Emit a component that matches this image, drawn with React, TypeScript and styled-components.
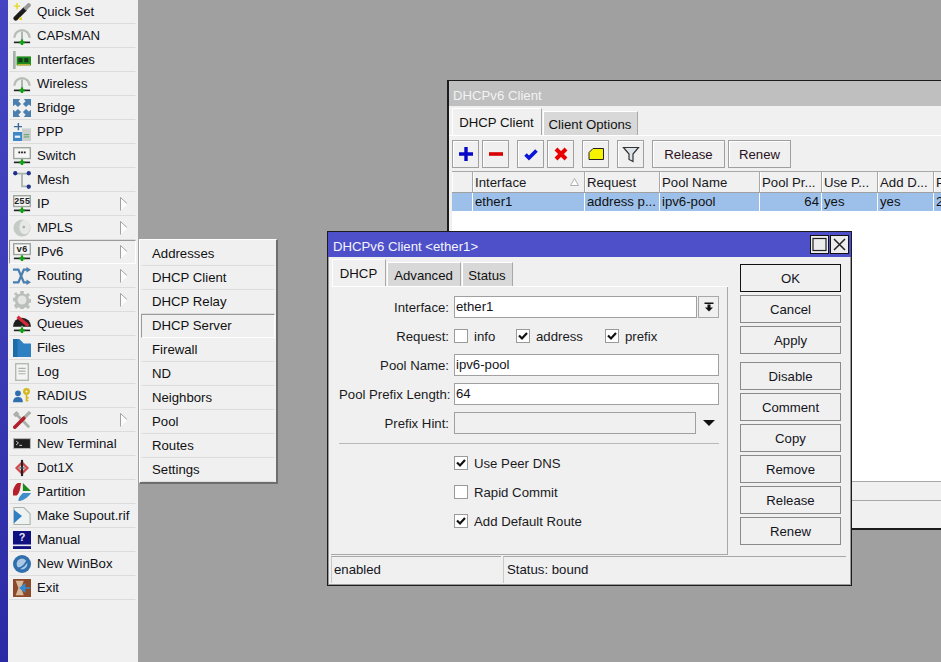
import React from "react";
import styled, { createGlobalStyle } from "styled-components";

const Global = createGlobalStyle`
  html, body { margin: 0; padding: 0; height: 662px; overflow: hidden; background: #a0a0a0; }
  body { font-family: "Liberation Sans", Arial, sans-serif; font-size: 13.2px; color: #111; }
  #root { height: 662px; }
  * { box-sizing: border-box; }
`;

const Page = styled.div`
  position: relative; width: 941px; height: 662px; overflow: hidden; display: flex; background: #a0a0a0;
`;
const Strip = styled.div`
  width: 8px; height: 100%; background: linear-gradient(180deg, #4545c4 0%, #3b3bb6 50%, #2a2aa4 100%);
`;
const Sidebar = styled.nav`
  width: 130px; height: 100%; background: #f0f0f0; display: flex; flex-direction: column; flex: none;
`;
const MenuRow = styled.div<{ $active?: boolean }>`
  position: relative; height: 24px; flex: none; display: flex; align-items: center; gap: 6px;
  padding: 0 0 1px 3px; margin: 0 2px 0 1px;
  border-bottom: 1px solid ${p => (p.$active ? "#fff" : "#dcdcdc")};
  border-top: 1px solid ${p => (p.$active ? "#9a9a9a" : "transparent")};
  border-left: 1px solid ${p => (p.$active ? "#9a9a9a" : "transparent")};
  border-right: 1px solid ${p => (p.$active ? "#fff" : "transparent")};
`;
const MenuIcon = styled.svg`
  width: 18px; height: 18px; flex: none; display: block;
`;
const MenuLabel = styled.span`
  flex: 1; white-space: nowrap; line-height: 16px; color: #101018;
`;
const Arrow = styled.svg`
  width: 8px; height: 14px; flex: none; margin-right: 7px;
`;

const SubMenu = styled.div`
  position: absolute; left: 139px; top: 239px; width: 139px; height: 245px;
  padding: 2px 1px 1px 1px; background: #f0f0f0; display: flex; flex-direction: column;
  border-top: 1px solid #fff; border-left: 1px solid #fff;
  border-right: 2px solid #6e6e6e; border-bottom: 2px solid #6e6e6e;
`;
const SubRow = styled.div<{ $hover?: boolean }>`
  height: 24px; flex: none; display: flex; align-items: center; padding: 0 0 1px 10px; white-space: nowrap;
  border-bottom: 1px solid ${p => (p.$hover ? "#fff" : "#dcdcdc")};
  border-top: 1px solid ${p => (p.$hover ? "#9a9a9a" : "transparent")};
  border-left: 1px solid ${p => (p.$hover ? "#9a9a9a" : "transparent")};
  border-right: 1px solid ${p => (p.$hover ? "#fff" : "transparent")};
`;

const BackWindow = styled.section`
  position: absolute; left: 447px; top: 80px; width: 600px; height: 450px;
  background: #f0f0f0; border: 1px solid #1c1c1c; border-left-width: 2px; border-bottom-width: 2px;
  display: flex; flex-direction: column;
`;
const BackTitle = styled.div`
  height: 25px; flex: none; background: #bfbfbf; color: #f2f2f2; padding: 3px 0 0 4px; display: flex; align-items: center;
`;
const TabStrip = styled.div<{ $left: number }>`
  height: 30px; flex: none; display: flex; align-items: flex-end; padding-left: ${p => p.$left}px; gap: 1px;
  border-bottom: 1px solid #fff;
`;
const Tab = styled.div<{ $active?: boolean; $w: number }>`
  width: ${p => p.$w}px; height: ${p => (p.$active ? 27 : 24)}px; flex: none;
  display: flex; align-items: center; justify-content: center; white-space: nowrap;
  background: ${p => (p.$active ? "#f0f0f0" : "#d8d8d8")};
  border-top: 1px solid #fff; border-left: 1px solid #fff;
  border-right: 1px solid #a8a8a8;
  padding: 1px 1px 0 0;
`;
const Toolbar = styled.div`
  height: 35px; flex: none; padding: 4px 0 0 3px; display: flex; align-items: flex-start;
`;
const ToolButton = styled.button<{ $w: number; $ml?: number }>`
  width: ${p => p.$w}px; height: 28px; flex: none; margin-left: ${p => p.$ml ?? 0}px;
  background: #f0f0f0; border: 1px solid #a0a0a0; padding: 0;
  font: inherit; color: #2a1020; display: flex; align-items: center; justify-content: center;
  box-shadow: inset 1px 1px 0 #fff;
`;
const ToolIcon = styled.svg`
  width: 20px; height: 20px; display: block;
`;
const TableArea = styled.div`
  flex: 1; margin-left: 3px; background: #fff; display: flex; flex-direction: column;
`;
const Grid = styled.div`
  display: grid; grid-template-columns: 21px 112px 75px 100px 62px 56px 56px 100px;
`;
const HeadCell = styled.div`
  position: relative; height: 22px; background: #f0f0f0; border-top: 1px solid #a8a8a8; border-bottom: 1px solid #a0a0a0;
  border-right: 1px solid #a8a8a8; box-shadow: inset 1px 0 0 #fff;
  padding-left: 2px; line-height: 21px; white-space: nowrap; overflow: hidden; color: #181820;
`;
const SortMark = styled.svg`
  position: absolute; right: 5px; top: 6px; width: 9px; height: 8px;
`;
const DataCell = styled.div<{ $right?: boolean }>`
  height: 18px; background: #9dc0ea; border-right: 1px solid #fff; padding: 0 2px 0 2px; line-height: 17px;
  white-space: nowrap; overflow: hidden; text-align: ${p => (p.$right ? "right" : "left")};
`;
const BackFooter = styled.div`
  height: 47px; flex: none; display: flex; flex-direction: column;
`;
const FooterBand = styled.div<{ $h: number }>`
  height: ${p => p.$h}px; border-top: 1px solid #a8a8a8; background: #f0f0f0;
`;

const Dialog = styled.section`
  position: absolute; left: 327px; top: 231px; width: 525px; height: 355px;
  background: #f0f0f0; border: 1px solid #1c1c1c; display: flex; flex-direction: column;
  box-shadow: inset 1px 0 0 #9a9a9a, inset -1px 0 0 #9a9a9a, inset 0 -1px 0 #9a9a9a;
`;
const DialogTitle = styled.div`
  height: 25px; flex: none; background: #4d50c8; color: #f4f4fc; padding: 0 2px 0 5px; display: flex; align-items: center;
  justify-content: space-between;
`;
const DialogTitleText = styled.span`
  padding-top: 3px;
`;
const WinButtons = styled.div`
  display: flex; gap: 1px;
`;
const WinButton = styled.button`
  width: 19px; height: 19px; padding: 0; background: #ececec; border: 1px solid #111; display: flex; align-items: center; justify-content: center;
`;
const WinGlyph = styled.svg`
  width: 15px; height: 15px; display: block;
`;
const DialogBody = styled.div`
  flex: 1; min-height: 0; display: flex; padding-left: 3px;
`;
const LeftCol = styled.div`
  width: 397px; flex: none; display: flex; flex-direction: column;
`;
const Panel = styled.div`
  height: 268px; flex: none; padding: 9px 8px 0 8px; display: flex; flex-direction: column; gap: 7px;
  border-right: 1px solid #a8a8a8; border-bottom: 1px solid #a8a8a8;
`;
const FormRow = styled.div`
  height: 22px; flex: none; display: flex; align-items: center;
`;
const FieldLabel = styled.label`
  width: 110px; flex: none; margin-right: 5px; text-align: right; white-space: nowrap; color: #1a1a22;
`;
const Input = styled.div<{ $disabled?: boolean; $w?: number }>`
  width: ${p => (p.$w ? `${p.$w}px` : "auto")}; flex: ${p => (p.$w ? "none" : 1)}; height: 22px;
  background: ${p => (p.$disabled ? "#f0f0f0" : "#fff")}; border: 1px solid #a0a0a0; padding: 0 1px; line-height: 19px; color: #14141c;
`;
const DropButton = styled.button`
  width: 21px; height: 22px; margin-left: 1px; padding: 0; background: #f0f0f0; border: 1px solid #a8a8a8;
  display: flex; align-items: center; justify-content: center;
`;
const DropMark = styled.svg`
  width: 12px; height: 12px; display: block;
`;
const HintArrow = styled.svg`
  width: 12px; height: 6px; margin-left: 7px; flex: none;
`;
const CheckItem = styled.div<{ $w?: number }>`
  width: ${p => (p.$w ? `${p.$w}px` : "auto")}; flex: none; display: flex; align-items: center; gap: 6px; white-space: nowrap; color: #1a1a22;
`;
const CheckBox = styled.span`
  width: 14px; height: 14px; flex: none; background: #fff; border: 1px solid #9a9a9a; display: flex; align-items: center; justify-content: center;
`;
const CheckMark = styled.svg`
  width: 10px; height: 10px; display: block;
`;
const Divider = styled.div`
  height: 1px; flex: none; margin: 2px 0 1px; background: #b8b8b8;
`;
const RightCol = styled.div`
  width: 101px; margin-left: 12px; flex: none; padding-top: 7px; display: flex; flex-direction: column; gap: 3px;
`;
const ActionButton = styled.button<{ $primary?: boolean; $gap?: number }>`
  height: 28px; flex: none; padding: 0; margin-top: ${p => p.$gap ?? 0}px; background: #f0f0f0; font: inherit; color: #14141c;
  border: 1px solid ${p => (p.$primary ? "#111" : "#8a8a8a")};
`;
const StatusBar = styled.div`
  height: 27px; flex: none; margin: 0 5px 2px 3px; display: flex; gap: 2px;
`;
const StatusCell = styled.div<{ $w?: number }>`
  width: ${p => (p.$w ? `${p.$w}px` : "auto")}; flex: ${p => (p.$w ? "none" : 1)}; border-top: 1px solid #a8a8a8; border-left: 1px solid #c8c8c8;
  padding: 5px 0 0 ${p => (p.$w ? 2 : 3)}px; line-height: 16px; color: #14141c;
`;

const Base = ({ children }: { children: React.ReactNode }) => <MenuIcon viewBox="0 0 20 20">{children}</MenuIcon>;
const PlugBase = () => (
  <>
    <rect x="1" y="16.2" width="18" height="1.8" fill="#222" />
    <rect x="9" y="12" width="2" height="4" fill="#9aa" />
    <path d="M10 14v6M7 17h6" stroke="#12a012" strokeWidth="2.6" />
  </>
);
const Antenna = () => (
  <Base>
    <path d="M1.500 12 A8.500 8.500 0 0 1 18.500 12" fill="#eef0ee" stroke="#b8bdb8" strokeWidth="2.6" />
    <path d="M10 5v10" stroke="#9aa09a" strokeWidth="1.600" />
    <PlugBase />
  </Base>
);
const QuickIcon = () => (
  <Base>
    <path d="M3 17 L13 7" stroke="#1c1c1c" strokeWidth="5" strokeLinecap="round" />
    <path d="M13 7 L19 1" stroke="#9a9a9a" strokeWidth="4.500" />
    <path d="M4.500 0v7M1 3.500h7" stroke="#e6d81e" strokeWidth="1.600" />
    <path d="M7 16h3v3H7z" fill="#e6d81e" />
  </Base>
);
const InterfacesIcon = () => (
  <Base>
    <rect x="0" y="0" width="3" height="20" fill="#a6b2a8" />
    <rect x="4" y="6" width="16" height="10" fill="#1d8c1d" />
    <rect x="6" y="8" width="4.500" height="4.500" fill="#1a3a1a" />
    <rect x="12.500" y="8" width="4.500" height="4.500" fill="#1a3a1a" />
    <rect x="5" y="14.500" width="14" height="1.500" fill="#c8b43a" />
  </Base>
);
const BridgeIcon = () => (
  <Base>
    <g fill="#4b7fae">
      <path d="M0 0h8L6 2.500 9 5.500 5.500 9 2.500 6 0 8z" />
      <path d="M20 0h-8l2 2.500-3 3L14.500 9l3-3L20 8z" />
      <path d="M0 20h8l-2-2.500 3-3L5.500 11l-3 3L0 12z" />
      <path d="M20 20h-8l2-2.500-3-3 3.500-3.500 3 3 2.500-2z" />
    </g>
  </Base>
);
const PPPIcon = () => (
  <Base>
    <path d="M6 0v8M1 4h9" stroke="#3b6a96" strokeWidth="1.600" />
    <rect x="0" y="10" width="10" height="10" fill="#3f86c6" />
    <rect x="2" y="14" width="6" height="2.500" fill="#e8f0f8" />
    <rect x="10" y="6" width="10" height="14" fill="#c9cfcc" />
    <path d="M12 13h6M12 15.500h6" stroke="#4d9a5a" strokeWidth="1" />
  </Base>
);
const SwitchIcon = () => (
  <Base>
    <rect x=".8" y=".8" width="18.400" height="12" fill="#f6f6f6" stroke="#9aa39c" strokeWidth="1.500" />
    <rect x="6" y="5" width="2" height="2" fill="#222" />
    <rect x="9" y="5" width="2" height="2" fill="#222" />
    <rect x="12" y="5" width="2" height="2" fill="#222" />
    <PlugBase />
  </Base>
);
const MeshIcon = () => (
  <Base>
    <path d="M3 3h14M10 3v14h7" stroke="#a9b3ac" strokeWidth="2" fill="none" />
    <circle cx="2.500" cy="2.500" r="2.400" fill="#1f2f8c" />
    <circle cx="17.500" cy="2.500" r="2.400" fill="#1f2f8c" />
    <circle cx="17.500" cy="17.500" r="2.400" fill="#1f2f8c" />
  </Base>
);
const BoxText = ({ t }: { t: string }) => (
  <Base>
    <rect x=".8" y=".8" width="18.400" height="12" fill="#f6f6f6" stroke="#9aa39c" strokeWidth="1.500" />
    <text x="10" y="10.500" fontSize="10" fontFamily="Liberation Mono, monospace" fontWeight="700" textAnchor="middle" fill="#222">{t}</text>
    <PlugBase />
  </Base>
);
const MplsIcon = () => (
  <Base>
    <circle cx="10" cy="10" r="9.500" fill="#c4cac5" />
    <ellipse cx="13" cy="9" rx="6" ry="8" fill="#e6e8e6" />
    <circle cx="12" cy="9" r="1.500" fill="#a8aea9" />
  </Base>
);
const RoutingIcon = () => (
  <Base>
    <g fill="none" stroke="#4b7fae" strokeWidth="2.400">
      <path d="M0 3h6l6 14h4" />
      <path d="M0 17h6l6-14h4" />
    </g>
    <path d="M15 0l5 3-5 3zM15 14l5 3-5 3z" fill="#4b7fae" />
  </Base>
);
const SystemIcon = () => (
  <Base>
    <path d="M8 0h4v3l2.500 1 2-2 2.500 2.500-2 2 1 2.500h2v4h-2l-1 2.500 2 2-2.500 2.500-2-2-2.500 1v2H8v-2l-2.500-1-2 2L1 16l2-2-1-2.500H0v-4h2l1-2.500-2-2L3.500 1.500l2 2L8 3z" fill="#b9bfba" />
    <circle cx="10" cy="10" r="5" fill="#e4e6e4" />
  </Base>
);
const QueuesIcon = () => (
  <Base>
    <path d="M0 13 A10 10 0 0 1 20 13z" fill="#1e1e1e" />
    <path d="M5 2 L17 12" stroke="#d8283a" strokeWidth="3.500" />
    <PlugBase />
  </Base>
);
const FilesIcon = () => (
  <Base>
    <path d="M0 0h7l5 5h8v15H0z" fill="#2f80c2" />
    <path d="M0 0h5v20H0z" fill="#1e6ba8" />
  </Base>
);
const LogIcon = () => (
  <Base>
    <rect x="3" y=".8" width="14" height="18.400" fill="#f4f4f4" stroke="#b0b8b0" strokeWidth="1.500" />
    <path d="M6 6h8M6 9h8M6 12h8" stroke="#a8b0a8" strokeWidth="1.200" />
  </Base>
);
const RadiusIcon = () => (
  <Base>
    <circle cx="5.500" cy="7" r="3.200" fill="#2f6fb0" />
    <path d="M0 17c0-4 2-6 5.500-6s5.500 2 5.500 6z" fill="#2f6fb0" />
    <circle cx="15" cy="5" r="3.800" fill="#d4b81c" />
    <circle cx="15" cy="5" r="1.200" fill="#f0f0f0" />
    <path d="M15 8v8M15 12h2.500M15 15h2" stroke="#d4b81c" strokeWidth="1.800" />
  </Base>
);
const ToolsIcon = () => (
  <Base>
    <path d="M2 2 L18 18" stroke="#a9b0aa" strokeWidth="3" />
    <path d="M0 4l4-4 3 3-4 4z" fill="#a9b0aa" />
    <path d="M19 1 L11 9" stroke="#a9b0aa" strokeWidth="3.500" />
    <path d="M12 8 L2 18" stroke="#b3202c" strokeWidth="4" strokeLinecap="round" />
  </Base>
);
const TerminalIcon = () => (
  <Base>
    <rect x=".6" y="4" width="18.800" height="11" fill="#1d1d1d" stroke="#b4b8b4" strokeWidth="1.200" />
    <path d="M3.500 6.500 L6 9 L3.500 11" stroke="#eee" strokeWidth="1" fill="none" />
    <path d="M7 11.500h3" stroke="#eee" strokeWidth="1" />
  </Base>
);
const DotIcon = () => (
  <Base>
    <path d="M10 4 L16 10 L10 16 L4 10z" fill="none" stroke="#cf4a50" strokeWidth="2.600" />
    <path d="M10 1v18" stroke="#222" strokeWidth="2.400" />
    <path d="M7 10h6" stroke="#555" strokeWidth="1.500" />
  </Base>
);
const PartitionIcon = () => (
  <Base>
    <path d="M9 0 L5 0 C1 3 -1 9 0 14 L4 14 C8 11 8 5 9 0z" fill="#b5202c" />
    <path d="M11 0 L20 9 L11 9z" fill="#1e8a1e" />
    <path d="M6 20 C10 20 16 17 20 11 L11 11 C8 14 6 16 6 20z" fill="#3f8ccc" />
  </Base>
);
const SupoutIcon = () => (
  <Base>
    <path d="M1 .6h11l7 7V19.400H1z" fill="#eef2f0" stroke="#aab4ae" strokeWidth="1.200" />
    <path d="M1 3 L10 10 L1 18z" fill="#2f80c2" />
  </Base>
);
const ManualIcon = () => (
  <Base>
    <rect x="0" y="0" width="20" height="20" fill="#101080" />
    <text x="10" y="11" fontSize="12" fontFamily="Liberation Sans, sans-serif" fontWeight="700" textAnchor="middle" fill="#e8e8f4">?</text>
    <rect x="0" y="15" width="20" height="1.800" fill="#e8e8f4" />
  </Base>
);
const WinboxIcon = () => (
  <Base>
    <circle cx="10" cy="10" r="10" fill="#2f6fae" />
    <circle cx="10" cy="10" r="6" fill="#a9c8e4" />
    <path d="M5 15 C10 15 15 10 16 5" stroke="#2f6fae" strokeWidth="2" fill="none" />
  </Base>
);
const ExitIcon = () => (
  <Base>
    <rect x="0" y="0" width="20" height="20" fill="#8c4a2a" />
    <path d="M3 2h9L9 10l3 8H3l3-8z" fill="#d8b89a" />
    <path d="M19 10h-7M13 6l-5 4 5 4z" stroke="#2f8cd6" strokeWidth="1.500" fill="#2f8cd6" />
  </Base>
);

type Item = { label: string; icon: React.ReactNode; arrow?: boolean; active?: boolean };
const items: Item[] = [
  { label: "Quick Set", icon: <QuickIcon /> },
  { label: "CAPsMAN", icon: <Antenna /> },
  { label: "Interfaces", icon: <InterfacesIcon /> },
  { label: "Wireless", icon: <Antenna /> },
  { label: "Bridge", icon: <BridgeIcon /> },
  { label: "PPP", icon: <PPPIcon /> },
  { label: "Switch", icon: <SwitchIcon /> },
  { label: "Mesh", icon: <MeshIcon /> },
  { label: "IP", icon: <BoxText t="255" />, arrow: true },
  { label: "MPLS", icon: <MplsIcon />, arrow: true },
  { label: "IPv6", icon: <BoxText t="v6" />, arrow: true, active: true },
  { label: "Routing", icon: <RoutingIcon />, arrow: true },
  { label: "System", icon: <SystemIcon />, arrow: true },
  { label: "Queues", icon: <QueuesIcon /> },
  { label: "Files", icon: <FilesIcon /> },
  { label: "Log", icon: <LogIcon /> },
  { label: "RADIUS", icon: <RadiusIcon /> },
  { label: "Tools", icon: <ToolsIcon />, arrow: true },
  { label: "New Terminal", icon: <TerminalIcon /> },
  { label: "Dot1X", icon: <DotIcon /> },
  { label: "Partition", icon: <PartitionIcon /> },
  { label: "Make Supout.rif", icon: <SupoutIcon /> },
  { label: "Manual", icon: <ManualIcon /> },
  { label: "New WinBox", icon: <WinboxIcon /> },
  { label: "Exit", icon: <ExitIcon /> },
];
const sub = ["Addresses", "DHCP Client", "DHCP Relay", "DHCP Server", "Firewall", "ND", "Neighbors", "Pool", "Routes", "Settings"];

const Tick = () => (
  <CheckMark viewBox="0 0 10 10"><path d="M1 4.500 L4 7.500 L9 2" stroke="#111" strokeWidth="2.200" fill="none" /></CheckMark>
);
const Check = ({ on, label, w }: { on?: boolean; label: string; w?: number }) => (
  <CheckItem $w={w}>
    <CheckBox>{on && <Tick />}</CheckBox>
    {label}
  </CheckItem>
);

export default function App() {
  return (
    <Page>
      <Global />
      <Strip />
      <Sidebar>
        {items.map(it => (
          <MenuRow key={it.label} $active={it.active}>
            {it.icon}
            <MenuLabel>{it.label}</MenuLabel>
            {it.arrow && (
              <Arrow viewBox="0 0 8 14"><path d="M.5 .5 L7.500 7 L.5 13.500z" fill="#fff" stroke="none" /><path d="M.5 13.500V.5L7 6.500" fill="none" stroke="#a0a0a0" /></Arrow>
            )}
          </MenuRow>
        ))}
      </Sidebar>

      <SubMenu>
        {sub.map(s => <SubRow key={s} $hover={s === "DHCP Server"}>{s}</SubRow>)}
      </SubMenu>

      <BackWindow>
        <BackTitle>DHCPv6 Client</BackTitle>
        <TabStrip $left={3}>
          <Tab $active $w={90}>DHCP Client</Tab>
          <Tab $w={95}>Client Options</Tab>
        </TabStrip>
        <Toolbar>
          <ToolButton $w={27}>
            <ToolIcon viewBox="0 0 20 20"><path d="M10 3v14M3 10h14" stroke="#0808c8" strokeWidth="3.400" /></ToolIcon>
          </ToolButton>
          <ToolButton $w={27} $ml={3}>
            <ToolIcon viewBox="0 0 20 20"><path d="M3 10h14" stroke="#d80000" strokeWidth="3.600" /></ToolIcon>
          </ToolButton>
          <ToolButton $w={27} $ml={8}>
            <ToolIcon viewBox="0 0 20 20"><path d="M4.500 10.500 L8 14 L15.500 6.500" stroke="#0a14d8" strokeWidth="3.600" fill="none" /></ToolIcon>
          </ToolButton>
          <ToolButton $w={27} $ml={3}>
            <ToolIcon viewBox="0 0 20 20"><path d="M5 5 L15 15 M15 5 L5 15" stroke="#e80000" strokeWidth="4" /></ToolIcon>
          </ToolButton>
          <ToolButton $w={27} $ml={8}>
            <ToolIcon viewBox="0 0 20 20"><path d="M3 8.500 L7 4.500 H17.500 V15.500 H3z" fill="#f6f200" stroke="#222" strokeWidth="1" /></ToolIcon>
          </ToolButton>
          <ToolButton $w={27} $ml={8}>
            <ToolIcon viewBox="0 0 20 20"><path d="M2.500 3.500h15L12 10v7.500l-4-2V10z" fill="#dce4ea" stroke="#333" strokeWidth="1.200" /></ToolIcon>
          </ToolButton>
          <ToolButton $w={73} $ml={8}>Release</ToolButton>
          <ToolButton $w={63} $ml={3}>Renew</ToolButton>
        </Toolbar>
        <TableArea>
          <Grid>
            <HeadCell />
            <HeadCell>
              Interface
              <SortMark viewBox="0 0 9 8"><path d="M4.500 .5 L8.500 7.500 H.5z" fill="#fff" stroke="#b0b0b0" /></SortMark>
            </HeadCell>
            <HeadCell>Request</HeadCell>
            <HeadCell>Pool Name</HeadCell>
            <HeadCell>Pool Pr...</HeadCell>
            <HeadCell>Use P...</HeadCell>
            <HeadCell>Add D...</HeadCell>
            <HeadCell>Pool...</HeadCell>
            <DataCell />
            <DataCell>ether1</DataCell>
            <DataCell>address p...</DataCell>
            <DataCell>ipv6-pool</DataCell>
            <DataCell $right>64</DataCell>
            <DataCell>yes</DataCell>
            <DataCell>yes</DataCell>
            <DataCell>2</DataCell>
          </Grid>
        </TableArea>
        <BackFooter>
          <FooterBand $h={19} />
          <FooterBand $h={28} />
        </BackFooter>
      </BackWindow>

      <Dialog>
        <DialogTitle>
          <DialogTitleText>DHCPv6 Client &lt;ether1&gt;</DialogTitleText>
          <WinButtons>
            <WinButton>
              <WinGlyph viewBox="0 0 15 15"><rect x="1" y="1.500" width="13" height="12" fill="none" stroke="#222" strokeWidth="1.200" /></WinGlyph>
            </WinButton>
            <WinButton>
              <WinGlyph viewBox="0 0 15 15"><path d="M2 2 L13 13 M13 2 L2 13" stroke="#222" strokeWidth="1.500" /></WinGlyph>
            </WinButton>
          </WinButtons>
        </DialogTitle>
        <DialogBody>
          <LeftCol>
            <TabStrip $left={1}>
              <Tab $active $w={54}>DHCP</Tab>
              <Tab $w={74}>Advanced</Tab>
              <Tab $w={51}>Status</Tab>
            </TabStrip>
            <Panel>
              <FormRow>
                <FieldLabel>Interface:</FieldLabel>
                <Input>ether1</Input>
                <DropButton>
                  <DropMark viewBox="0 0 12 12"><path d="M1.500 1.500h9v1.500h-9zM4.500 3.500h3v3h2.500L6 10.500 2 6.500h2.500z" fill="#111" /></DropMark>
                </DropButton>
              </FormRow>
              <FormRow>
                <FieldLabel>Request:</FieldLabel>
                <Check label="info" w={62} />
                <Check on label="address" w={89} />
                <Check on label="prefix" />
              </FormRow>
              <FormRow>
                <FieldLabel>Pool Name:</FieldLabel>
                <Input>ipv6-pool</Input>
              </FormRow>
              <FormRow>
                <FieldLabel>Pool Prefix Length:</FieldLabel>
                <Input>64</Input>
              </FormRow>
              <FormRow>
                <FieldLabel>Prefix Hint:</FieldLabel>
                <Input $disabled $w={242} />
                <HintArrow viewBox="0 0 12 6"><path d="M0 0h12L6 6z" fill="#111" /></HintArrow>
              </FormRow>
              <Divider />
              <FormRow>
                <FieldLabel />
                <Check on label="Use Peer DNS" />
              </FormRow>
              <FormRow>
                <FieldLabel />
                <Check label="Rapid Commit" />
              </FormRow>
              <FormRow>
                <FieldLabel />
                <Check on label="Add Default Route" />
              </FormRow>
            </Panel>
          </LeftCol>
          <RightCol>
            <ActionButton $primary>OK</ActionButton>
            <ActionButton>Cancel</ActionButton>
            <ActionButton>Apply</ActionButton>
            <ActionButton $gap={5}>Disable</ActionButton>
            <ActionButton>Comment</ActionButton>
            <ActionButton>Copy</ActionButton>
            <ActionButton>Remove</ActionButton>
            <ActionButton>Release</ActionButton>
            <ActionButton>Renew</ActionButton>
          </RightCol>
        </DialogBody>
        <StatusBar>
          <StatusCell $w={170}>enabled</StatusCell>
          <StatusCell>Status: bound</StatusCell>
        </StatusBar>
      </Dialog>
    </Page>
  );
}
